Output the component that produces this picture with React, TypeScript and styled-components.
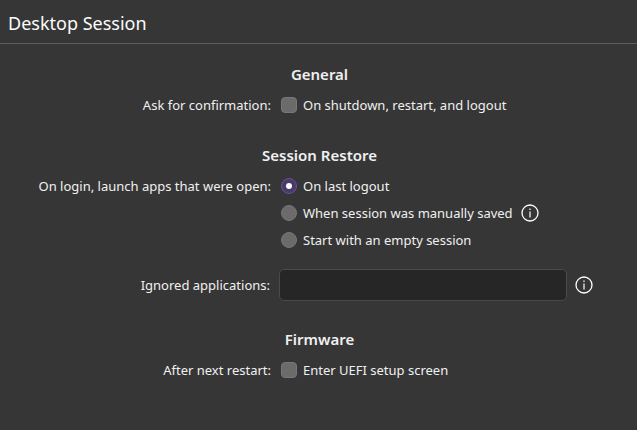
import React from "react"
import styled, { createGlobalStyle } from "styled-components"

const Global = createGlobalStyle`
  html, body { margin: 0; padding: 0; background: #363636; }
`

const Page = styled.div`
  width: 637px;
  height: 430px;
  overflow: hidden;
  background: #363636;
  color: #f0f0f0;
  font-family: "Noto Sans", sans-serif;
  font-size: 13px;
`

const Header = styled.header`
  height: 44px;
  box-sizing: border-box;
  border-bottom: 1px solid #5e5e5e;
  padding: 11px 0 0 8px;
  font-size: 18px;
  line-height: 24px;
  color: #fcfcfc;
`

const SectionTitle = styled.h2<{ $top: number }>`
  margin: ${(p) => p.$top}px 0 0;
  padding-left: 2px;
  font-size: 15px;
  font-weight: 600;
  line-height: 20px;
  text-align: center;
`

const Row = styled.div<{ $top?: number }>`
  display: grid;
  grid-template-columns: 271px auto 1fr;
  align-items: center;
  column-gap: 10px;
  height: 20px;
  margin-top: ${(p) => p.$top ?? 0}px;
  line-height: 20px;
`

const Label = styled.div`
  text-align: right;
`

const Option = styled.div`
  display: flex;
  align-items: center;
  gap: 6px;
  grid-column: 2 / 4;
`

const Check = styled.span`
  width: 16px;
  height: 16px;
  box-sizing: border-box;
  border-radius: 4px;
  background: #6b6b6b;
  border: 1px solid #777;
`

const Radio = styled.span<{ $on?: boolean }>`
  width: 16px;
  height: 16px;
  box-sizing: border-box;
  border-radius: 50%;
  background: ${(p) => (p.$on ? "#4a3a68" : "#6b6b6b")};
  border: 1px solid ${(p) => (p.$on ? "#6a4f9c" : "#777")};
  display: flex;
  align-items: center;
  justify-content: center;
  &::after {
    content: "";
    display: ${(p) => (p.$on ? "block" : "none")};
    width: 6px;
    height: 6px;
    border-radius: 50%;
    background: #fcfcfc;
  }
`

const Spacer = styled.div``

const InputRow = styled.div`
  display: flex;
  align-items: center;
  height: 32px;
  margin-top: 19px;
`

const InputLabel = styled.div`
  width: 270px;
  text-align: right;
`

const Input = styled.div`
  width: 288px;
  height: 32px;
  box-sizing: border-box;
  margin-left: 9px;
  background: #262626;
  border: 1px solid #4a4a4a;
  border-radius: 5px;
`

const InfoWrap = styled.span<{ $gap: number }>`
  display: inline-flex;
  margin-left: ${(p) => p.$gap}px;
`

const Info = ({ gap }: { gap: number }) => (
  <InfoWrap $gap={gap}>
    <svg width="18" height="18" viewBox="0 0 18 18" fill="none">
      <circle cx="9" cy="9" r="8" stroke="#fff" strokeWidth="1.3" />
      <rect x="8.4" y="7.5" width="1.2" height="6" fill="#fff" />
      <rect x="8.4" y="4.5" width="1.2" height="1.5" fill="#fff" />
    </svg>
  </InfoWrap>
)

export default function App() {
  return (
    <Page>
      <Global />
      <Header>Desktop Session</Header>
      <SectionTitle $top={20}>General</SectionTitle>
      <Row $top={11}>
        <Label>Ask for confirmation:</Label>
        <Option>
          <Check />
          On shutdown, restart, and logout
        </Option>
      </Row>
      <SectionTitle $top={30}>Session Restore</SectionTitle>
      <Row $top={11}>
        <Label>On login, launch apps that were open:</Label>
        <Option>
          <Radio $on />
          On last logout
        </Option>
      </Row>
      <Row $top={7}>
        <Spacer />
        <Option>
          <Radio />
          When session was manually saved
          <Info gap={2} />
        </Option>
      </Row>
      <Row $top={7}>
        <Spacer />
        <Option>
          <Radio />
          Start with an empty session
        </Option>
      </Row>
      <InputRow>
        <InputLabel>Ignored applications:</InputLabel>
        <Input />
        <Info gap={8} />
      </InputRow>
      <SectionTitle $top={28}>Firmware</SectionTitle>
      <Row $top={11}>
        <Label>After next restart:</Label>
        <Option>
          <Check />
          Enter UEFI setup screen
        </Option>
      </Row>
    </Page>
  )
}
